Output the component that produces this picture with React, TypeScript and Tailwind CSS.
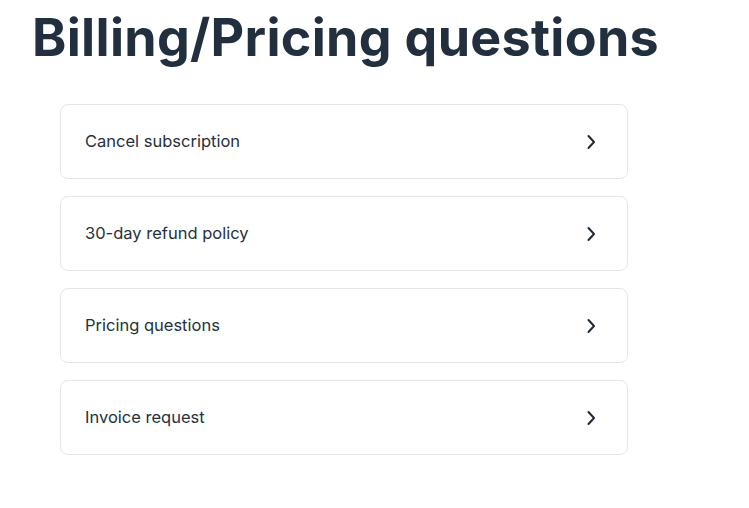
import React from "react";

const items = ["Cancel subscription", "30-day refund policy", "Pricing questions", "Invoice request"];

function Chevron() {
  return (
    <svg width="12" height="16" viewBox="0 0 12 16" fill="none" className="shrink-0">
      <path d="M3.5 2 L9 8 L3.5 14" stroke="#1f2a36" strokeWidth="2" strokeLinecap="round" strokeLinejoin="round" />
    </svg>
  );
}

export default function App() {
  return (
    <div className="w-[749px] h-[508px] bg-white overflow-hidden" style={{ fontFamily: "Inter, 'Noto Sans', sans-serif" }}>
      <h1 className="pl-[32px] pt-[4px] text-[52px] leading-[68px] font-bold text-[#222f3e] tracking-[0.3px]">
        Billing/Pricing questions
      </h1>
      <div className="ml-[60px] mt-[32px] w-[568px] flex flex-col gap-[17px]">
        {items.map((t) => (
          <div key={t} className="h-[75px] rounded-[8px] border border-[#e6e6e6] flex items-center justify-between pl-[24px] pr-[30px]">
            <span className="text-[16.5px] text-[#26313c]">{t}</span>
            <Chevron />
          </div>
        ))}
      </div>
    </div>
  );
}
